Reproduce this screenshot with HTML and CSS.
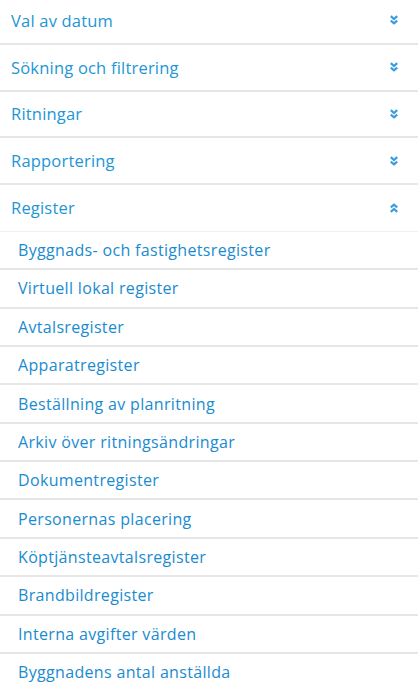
FILE: index.html
```html
<!DOCTYPE html>
<html lang="sv">
  <head>
    <meta charset="UTF-8" />
    <meta name="viewport" content="width=device-width, initial-scale=1.0" />
    <title>Meny</title>
    <link rel="stylesheet" href="styles.css">
  </head>
  <body>
    <div class="menu">
      <div class="section">
        <div class="section-head">
          <span>Val av datum</span>
          <svg class="chevron" viewBox="0 0 8 10"><path d="M0.8 1.2 L4 4 L7.2 1.2 M0.8 5.6 L4 8.4 L7.2 5.6"/></svg>
        </div>
      </div>
      <div class="section">
        <div class="section-head">
          <span>Sökning och filtrering</span>
          <svg class="chevron" viewBox="0 0 8 10"><path d="M0.8 1.2 L4 4 L7.2 1.2 M0.8 5.6 L4 8.4 L7.2 5.6"/></svg>
        </div>
      </div>
      <div class="section">
        <div class="section-head">
          <span>Ritningar</span>
          <svg class="chevron" viewBox="0 0 8 10"><path d="M0.8 1.2 L4 4 L7.2 1.2 M0.8 5.6 L4 8.4 L7.2 5.6"/></svg>
        </div>
      </div>
      <div class="section">
        <div class="section-head">
          <span>Rapportering</span>
          <svg class="chevron" viewBox="0 0 8 10"><path d="M0.8 1.2 L4 4 L7.2 1.2 M0.8 5.6 L4 8.4 L7.2 5.6"/></svg>
        </div>
      </div>
      <div class="section open">
        <div class="section-head">
          <span>Register</span>
          <svg class="chevron" viewBox="0 0 8 10"><path d="M0.8 4.4 L4 1.6 L7.2 4.4 M0.8 8.8 L4 6 L7.2 8.8"/></svg>
        </div>
        <ul class="section-items">
          <li>Byggnads- och fastighetsregister</li>
          <li>Virtuell lokal register</li>
          <li>Avtalsregister</li>
          <li>Apparatregister</li>
          <li>Beställning av planritning</li>
          <li>Arkiv över ritningsändringar</li>
          <li>Dokumentregister</li>
          <li>Personernas placering</li>
          <li>Köptjänsteavtalsregister</li>
          <li>Brandbildregister</li>
          <li>Interna avgifter värden</li>
          <li>Byggnadens antal anställda</li>
        </ul>
      </div>
    </div>
  </body>
</html>
```

FILE: styles.css
```css
body {
  font-family: "Open Sans", Lato, sans-serif;
  background-color: #fff;
  margin: 0;
  padding: 0;
}

.menu {
  margin-top: -2px;
}

.section-head {
  display: flex;
  align-items: center;
  justify-content: space-between;
  box-sizing: border-box;
  height: 46.75px;
  padding: 0 20px 0 11px;
  border-bottom: 2px solid #e6e6e6;
  color: #2196d6;
  font-size: 16.5px;
  letter-spacing: 0.2px;
  cursor: pointer;
}

.section.open .section-head {
  border-bottom: 1px solid #f0f0f0;
}

.chevron {
  width: 8px;
  height: 10px;
  fill: none;
  stroke: #3c9bdb;
  stroke-width: 2.2;
}

.section-items {
  list-style: none;
  margin: 0;
  padding: 0;
}

.section-items li {
  display: flex;
  align-items: center;
  box-sizing: border-box;
  height: 38.4px;
  padding: 0 18px;
  border-bottom: 2px solid #e6e6e6;
  color: #1a8bd0;
  font-size: 16px;
  letter-spacing: 0.33px;
  cursor: pointer;
}
```
